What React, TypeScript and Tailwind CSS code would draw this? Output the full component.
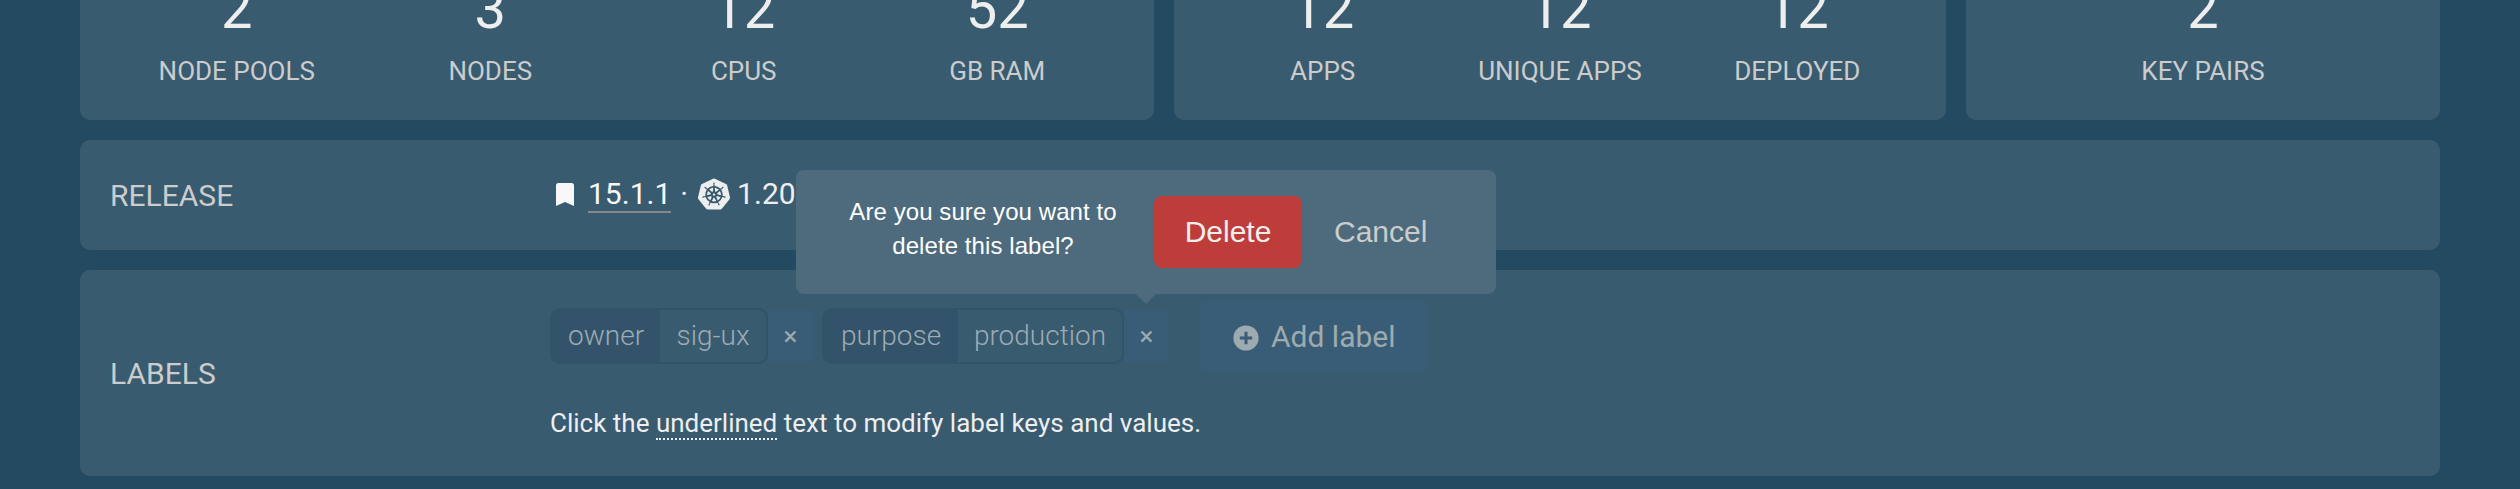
import type { ReactNode } from "react";
import { SiKubernetes } from "react-icons/si";

function Stat({ value, label }: { value: string; label: string }) {
  return (
    <div className="flex flex-1 flex-col items-center">
      <span className="text-[56px] leading-[56px] text-[#eeeeee]">{value}</span>
      <span className="mt-[19px] text-[26px] leading-[30px] whitespace-nowrap text-[#cccccc]">{label}</span>
    </div>
  );
}

function StatCard({ items }: { items: [string, string][] }) {
  return (
    <div className="flex h-[140px] items-end rounded-[10px] bg-[#385b70] px-[30px] pb-[34px]">
      {items.map(([value, label]) => (
        <Stat key={label} value={value} label={label} />
      ))}
    </div>
  );
}

function Row({ title, className, children }: { title: string; className: string; children: ReactNode }) {
  return (
    <section className={`flex items-center rounded-[10px] bg-[#385b70] pl-[30px] ${className}`}>
      <h2 className="w-[440px] pt-[2px] text-[30px] leading-[36px] text-[#cccccc]">{title}</h2>
      {children}
    </section>
  );
}

function RemoveButton({ children }: { children?: ReactNode }) {
  return (
    <button className="relative flex h-[52px] w-[45px] items-center justify-center rounded-[4px] bg-[#395d77] text-[26px] leading-none text-[#9dabb1]">
      <span>×</span>
      {children}
    </button>
  );
}

function Label({
  name,
  value,
  pillWidth,
  keyWidth,
  children,
}: {
  name: string;
  value: string;
  pillWidth: string;
  keyWidth: string;
  children?: ReactNode;
}) {
  return (
    <div className="flex items-center">
      <div
        className={`flex h-14 overflow-hidden rounded-[10px] border-2 border-[#33536a] text-[28px] font-light text-[#9dabb4] ${pillWidth}`}
      >
        <span className={`flex shrink-0 items-center justify-center bg-[#33536a] ${keyWidth}`}>{name}</span>
        <span className="flex flex-1 items-center justify-center">{value}</span>
      </div>
      <RemoveButton>{children}</RemoveButton>
    </div>
  );
}

function ConfirmPopover() {
  return (
    <div className="absolute bottom-[68px] left-[-328px] flex h-[124px] w-[700px] items-center rounded-[8px] bg-[#4d6b7c] pl-[46px] font-['Liberation_Sans',Arial,sans-serif] font-normal">
      <p className="w-[282px] pb-[6px] text-center text-[24px] leading-[34px] tracking-[0.08px] text-white">
        Are you sure you want to delete this label?
      </p>
      <span className="ml-[30px] flex h-[72px] w-[148px] items-center justify-center rounded-[8px] bg-[#be3d3b] text-[30px] text-[#eeeeee]">
        Delete
      </span>
      <span className="ml-[32px] text-[30px] text-[#cccccc]">Cancel</span>
      <svg className="absolute top-full left-[340px] h-[10px] w-[20px]" viewBox="0 0 20 10">
        <path d="M0 0h20L10 10z" fill="#4d6b7c" />
      </svg>
    </div>
  );
}

export default function App() {
  return (
    <main className="flex h-[489px] w-[2520px] flex-col justify-end overflow-hidden bg-[#234a61] px-20 pb-[13px] font-[Roboto,sans-serif]">
      <div className="grid shrink-0 grid-cols-[1074fr_772fr_474fr] gap-5">
        <StatCard
          items={[
            ["2", "NODE POOLS"],
            ["3", "NODES"],
            ["12", "CPUS"],
            ["52", "GB RAM"],
          ]}
        />
        <StatCard
          items={[
            ["12", "APPS"],
            ["12", "UNIQUE APPS"],
            ["12", "DEPLOYED"],
          ]}
        />
        <StatCard items={[["2", "KEY PAIRS"]]} />
      </div>

      <Row title="RELEASE" className="mt-5 h-[110px] shrink-0">
        <div className="flex items-center pb-[2px] pl-[6px] text-[30px] leading-[36px] text-[#eeeeee]">
          <svg className="h-[23px] w-[18px]" viewBox="0 0 18 23" fill="#f8f8f8">
            <path d="M2.5 0h13A2.5 2.5 0 0 1 18 2.5V23l-9-4-9 4V2.5A2.5 2.5 0 0 1 2.5 0z" />
          </svg>
          <span className="ml-[14px]">
            <span className="border-b-2 border-[#85898d] text-[#f8f8f8]">15.1.1</span>
          </span>
          <span className="ml-[9px]">·</span>
          <SiKubernetes className="ml-[10px] size-8" />
          <span className="ml-[7px]">1.20</span>
        </div>
      </Row>

      <Row title="LABELS" className="mt-5 h-[206px] shrink-0">
        <div className="flex flex-col">
          <div className="flex h-[72px] items-center">
            <div className="flex gap-[9px]">
              <Label name="owner" value="sig-ux" pillWidth="w-[218px]" keyWidth="w-[108px]" />
              <Label name="purpose" value="production" pillWidth="w-[302px]" keyWidth="w-[134px]">
                <ConfirmPopover />
              </Label>
            </div>
            <button className="ml-[31px] flex h-[72px] w-[228px] items-center rounded-[8px] bg-[#395d77] pl-[33px] text-[30px] text-[#9dabb1]">
              <svg className="mt-[3px] size-[26px]" viewBox="0 0 26 26">
                <circle cx="13" cy="13" r="12.6" fill="#9dabb1" />
                <path d="M13 6.8v12.4M6.8 13h12.4" stroke="#395d77" strokeWidth="3" />
              </svg>
              <span className="ml-[12px]">Add label</span>
            </button>
          </div>
          <p className="mt-[36px] mb-[8px] text-[26px] leading-[30px] text-[#eeeeee]">
            Click the <span className="border-b-2 border-dotted border-[#eeeeee]">underlined</span> text to modify
            label keys and values.
          </p>
        </div>
      </Row>
    </main>
  );
}
